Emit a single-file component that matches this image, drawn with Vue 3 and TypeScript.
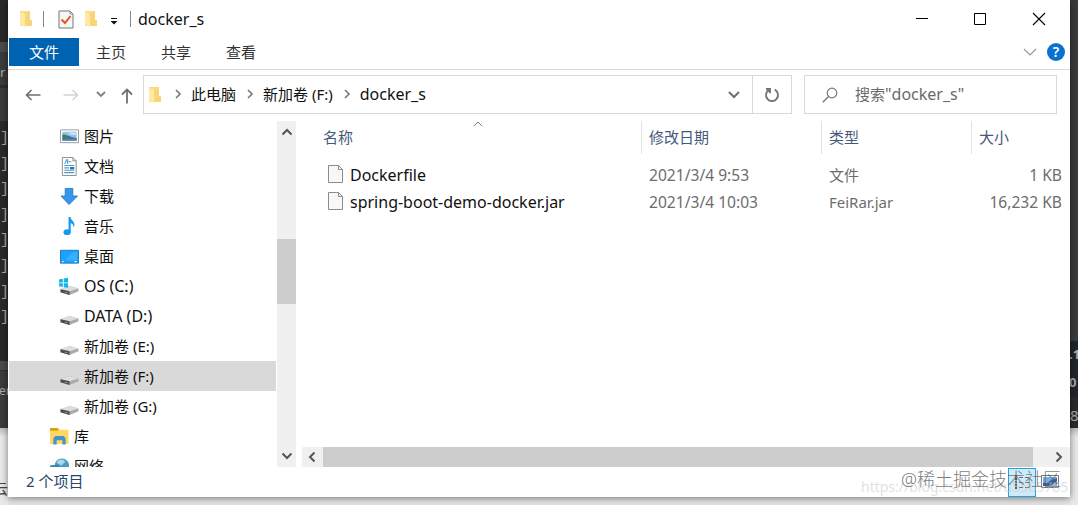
<template>
  <div class="desktop">
    <div class="strip left">
      <div class="band dark top"></div>
      <div class="band bar"></div>
      <div class="band panel tab">r</div>
      <div class="band panel gutter"></div>
      <div class="band dark console">
        <span v-for="n in 8" :key="n">]</span>
      </div>
      <div class="band bar thin"></div>
      <div class="band panel footer">er</div>
      <div class="band page">云</div>
    </div>

    <div class="window">
      <header class="titlebar">
        <svg class="folder" viewBox="0 0 14 18"><path d="M1 1h7v15H1z" fill="#f3d68b" /><path d="M2 1h9v10H2z" fill="#fbdc84" /><path d="M1 2l5 2v13l-5-2z" fill="#ffe9a6" /><path d="M6 4l5-3v9h2v6H6z" fill="#f8d578" /></svg>
        <i class="sep first"></i>
        <svg class="check" viewBox="0 0 16 19"><path d="M1 1h11l3 3v14H1z" fill="#f7f7f7" stroke="#777" /><path d="M12 1v3h3" fill="none" stroke="#999" /><path d="M3.500 9.500l3.500 3.500 5.500-7" fill="none" stroke="#e0561c" stroke-width="2" /></svg>
        <svg class="folder second" viewBox="0 0 14 18"><path d="M1 1h7v15H1z" fill="#f3d68b" /><path d="M2 1h9v10H2z" fill="#fbdc84" /><path d="M1 2l5 2v13l-5-2z" fill="#ffe9a6" /><path d="M6 4l5-3v9h2v6H6z" fill="#f8d578" /></svg>
        <svg class="customize" viewBox="0 0 8 8"><path d="M1 1.500h6" stroke="#111" /><path d="M0.500 4h7L4 7.500z" fill="#111" /></svg>
        <i class="sep"></i>
        <span class="latin">docker_s</span>
        <div class="controls">
          <svg viewBox="0 0 14 14"><path d="M2 6.500h12" stroke="#000" /></svg>
          <svg viewBox="0 0 14 14"><path d="M1.500 1.500h11v11h-11z" fill="none" stroke="#000" /></svg>
          <svg viewBox="0 0 14 14"><path d="M1 1l12 12M13 1L1 13" stroke="#000" stroke-width="1.1" /></svg>
        </div>
      </header>

      <nav class="ribbon">
        <span v-for="(tab, i) in tabs" :key="tab" class="ribbon-tab" :class="{ active: i === 0 }">{{ tab }}</span>
        <svg class="expand" viewBox="0 0 14 8"><path d="M1 1l6 6 6-6" fill="none" stroke="#999" stroke-width="1.2" /></svg>
        <span class="help">?</span>
      </nav>

      <div class="toolbar">
        <svg class="back" viewBox="0 0 16 12"><path d="M15.500 6H1.500M6.500 1l-5 5 5 5" fill="none" stroke="#707070" stroke-width="1.6" /></svg>
        <svg class="forward" viewBox="0 0 16 12"><path d="M0.500 6h14M9.500 1l5 5-5 5" fill="none" stroke="#d4d4d4" stroke-width="1.4" /></svg>
        <svg class="recent" viewBox="0 0 10 7"><path d="M1 1l4 4 4-4" fill="none" stroke="#808080" stroke-width="1.8" /></svg>
        <svg class="up" viewBox="0 0 12 16"><path d="M6 15.500V1.500M1 6.500l5-5 5 5" fill="none" stroke="#707070" stroke-width="1.8" /></svg>
        <div class="address">
          <svg class="folder" viewBox="0 0 14 18"><path d="M1 1h7v15H1z" fill="#f3d68b" /><path d="M2 1h9v10H2z" fill="#fbdc84" /><path d="M1 2l5 2v13l-5-2z" fill="#ffe9a6" /><path d="M6 4l5-3v9h2v6H6z" fill="#f8d578" /></svg>
          <template v-for="part in path" :key="part">
            <svg class="crumb-arrow" viewBox="0 0 6 10"><path d="M1 1l4 4-4 4" fill="none" stroke="#777" stroke-width="1.6" /></svg>
            <span :class="{ latin: isLatin(part) }">{{ part }}</span>
          </template>
          <svg class="drop" viewBox="0 0 12 8"><path d="M1 1l5 5 5-5" fill="none" stroke="#707070" stroke-width="2" /></svg>
          <div class="refresh">
            <svg viewBox="0 0 16 16"><path d="M10.800 2.700a6 6 0 1 1-5.600 0M2 2h4v4.300" fill="none" stroke="#757575" stroke-width="1.900" /></svg>
          </div>
        </div>
        <div class="search">
          <svg viewBox="0 0 16 16"><circle cx="10" cy="6" r="4.800" fill="none" stroke="#777" stroke-width="1.200" /><path d="M6.500 9.500L0.800 15.200" stroke="#777" stroke-width="1.300" /></svg>
          <span>搜索<span class="latin">"docker_s"</span></span>
        </div>
      </div>

      <main class="content">
        <aside class="tree">
          <div
            v-for="item in tree"
            :key="item.label"
            class="node"
            :class="{ selected: item.selected, root: item.root }"
          >
            <svg class="node-icon" viewBox="0 0 20 20">
              <template v-if="item.icon === 'picture'">
                <path d="M.5 3h19v13.500H.5z" fill="#fff" stroke="#9a9a9a" />
                <path d="M2.500 5h15v9.500h-15z" fill="#91c5ef" />
                <path d="M2.500 8c3-1 6 2 15 3.500v2h-15z" fill="#47776d" />
                <path d="M2.500 12.500l15-.5v2.500h-15z" fill="#4b83b5" />
                <path d="M9 6h8v2h-6z" fill="#d5ecfa" />
              </template>
              <template v-else-if="item.icon === 'document'">
                <path d="M2.500.5h11l3.500 3.500v15.500h-14.500z" fill="#fff" stroke="#8c8c8c" />
                <path d="M13.500.5v3.500h3.500" fill="none" stroke="#8c8c8c" />
                <path d="M5 7l2-4h1v4M9 5h3M4.500 9h10.500M4.500 11.500h5M4.500 14h10.500M4.500 16.500h10.500" fill="none" stroke="#4b9bc9" stroke-width="1.200" />
                <path d="M10.500 10.500h4.500v2.500h-4.500z" fill="#2675ab" />
              </template>
              <path v-else-if="item.icon === 'download'" d="M5.500 1.500h8v8h5L9.500 18.500 1 9.500h4.500z" fill="#3596eb" stroke="#2b7fc8" />
              <template v-else-if="item.icon === 'music'">
                <ellipse cx="7.500" cy="16" rx="3.800" ry="3" fill="#169bf0" />
                <path d="M9 0h2.200c0 4 6 5 3.300 11-.4-3-1.800-4.500-3.200-4.500V16H9z" fill="#169bf0" />
              </template>
              <template v-else-if="item.icon === 'desktop'">
                <path d="M.5 3.500h19v13.500H.5z" fill="#1ca4fa" stroke="#1879bd" />
                <path d="M6 14c2-5 7-8 12-9v9z" fill="#35b2ff" />
                <path d="M2 15.500h2M15 15.500h3" stroke="#fff" />
              </template>
              <template v-else-if="item.icon === 'drive' || item.icon === 'system'">
                <path d="M.5 13l9.500-3.500 9.500 2.500v3L10 19 .5 16z" fill="#aaa" />
                <path d="M.5 13L10 9.500l9.500 2.500-9.500 3z" fill="#dedede" />
                <path d="M.5 13l9.500 2v4L.5 16z" fill="#4d4d4d" />
                <path d="M5 16l3 .7" stroke="#999" />
                <path v-if="item.icon === 'system'" d="M-1 2.500l4-.7v3.900h-4zM4 1.600l4.500-.8v4.900H4zM-1 6.700h4v3.800l-4-.7zM4 6.700h4.500v4.700l-4.500-.7z" fill="#12b5ea" />
              </template>
              <template v-else-if="item.icon === 'library'">
                <path d="M0 1h8l2 2h9.500v15H0z" fill="#ffd765" />
                <path d="M0 1h8l1.500 2L8 4H0z" fill="#dda10b" />
                <path d="M3.500 18.500V12l2-2.500h9l2 2.500v6.500H13V14H7v4.500z" fill="#4595c9" />
              </template>
              <template v-else>
                <circle cx="12.500" cy="9" r="7.500" fill="#4c9ac5" />
                <path d="M7 6c2-5 8-4 9-1l-4 4z" fill="#add8ec" />
                <path d="M0 9l8-1 5 6-6 4-7-4z" fill="#3886b6" />
              </template>
            </svg>
            <span :class="{ latin: isLatin(item.label) }">{{ item.label }}</span>
          </div>
        </aside>
        <div class="vscroll">
          <svg viewBox="0 0 12 8"><path d="M1.500 6.500L6 2l4.500 4.500" fill="none" stroke="#555" stroke-width="2" /></svg>
          <div class="vthumb"></div>
          <svg viewBox="0 0 12 8"><path d="M1.500 1.500L6 6l4.500-4.500" fill="none" stroke="#555" stroke-width="2" /></svg>
        </div>
        <section class="files">
          <div class="row head">
            <span class="cell">名称
              <svg class="sort" viewBox="0 0 10 6"><path d="M1 5l4-4 4 4" fill="none" stroke="#777" /></svg>
            </span>
            <span class="cell">修改日期</span>
            <span class="cell">类型</span>
            <span class="cell">大小</span>
          </div>
          <div v-for="file in files" :key="file.name" class="row file">
            <span class="name">
              <svg viewBox="0 0 15 18"><path d="M.5.5h10l4 4v13H.5z" fill="#f8f8f8" stroke="#8c8c8c" /><path d="M10.500.5v4h4" fill="none" stroke="#8c8c8c" /></svg>
              <span class="latin">{{ file.name }}</span>
            </span>
            <span class="date">{{ file.date }}</span>
            <span>{{ file.type }}</span>
            <span class="size">{{ file.size }}</span>
          </div>
          <div class="hscroll">
            <svg viewBox="0 0 8 12"><path d="M6.500 1.500L2 6l4.500 4.500" fill="none" stroke="#555" stroke-width="2" /></svg>
            <div class="hthumb"></div>
            <svg viewBox="0 0 8 12"><path d="M1.500 1.500L6 6l-4.500 4.500" fill="none" stroke="#555" stroke-width="2" /></svg>
          </div>
        </section>
      </main>

      <footer class="status">
        <span>2 个项目</span>
        <div class="view details">
          <svg viewBox="0 0 18 16"><path d="M3 1v14" stroke="#665544" stroke-width="2" stroke-dasharray="2 1" /><path d="M6 3.500h4M12 3.500h4M6 8.500h4M12 8.500h4M6 13.500h4M12 13.500h4" stroke="#667078" /></svg>
        </div>
        <div class="view">
          <svg viewBox="0 0 18 14"><path d="M.5.5h17v12H.5z" fill="#fff" stroke="#777" /><path d="M2 2h14v9H2z" fill="#75afe8" /><path d="M2 8l5-1 9-4v3l-7 5H2z" fill="#375e9c" /></svg>
        </div>
      </footer>
    </div>

    <div class="strip right">
      <div class="band panel side"></div>
      <div class="band navy">.1</div>
      <div class="band navy">0</div>
      <div class="band dark last">8</div>
      <div class="band page"></div>
    </div>
    <div class="watermark url">https://blog.csdn.net/u5565785</div>
    <div class="watermark handle">@稀土掘金技术社区</div>
  </div>
</template>

<script lang="ts" setup>
interface TreeItem {
  label: string
  icon: string
  selected?: boolean
  root?: boolean
}

interface FileItem {
  name: string
  date: string
  type: string
  size: string
}

const tabs = ['文件', '主页', '共享', '查看']
const path = ['此电脑', '新加卷 (F:)', 'docker_s']

const tree: TreeItem[] = [
  { label: '图片', icon: 'picture' },
  { label: '文档', icon: 'document' },
  { label: '下载', icon: 'download' },
  { label: '音乐', icon: 'music' },
  { label: '桌面', icon: 'desktop' },
  { label: 'OS (C:)', icon: 'system' },
  { label: 'DATA (D:)', icon: 'drive' },
  { label: '新加卷 (E:)', icon: 'drive' },
  { label: '新加卷 (F:)', icon: 'drive', selected: true },
  { label: '新加卷 (G:)', icon: 'drive' },
  { label: '库', icon: 'library', root: true },
  { label: '网络', icon: 'network', root: true },
]

const files: FileItem[] = [
  { name: 'Dockerfile', date: '2021/3/4 9:53', type: '文件', size: '1 KB' },
  { name: 'spring-boot-demo-docker.jar', date: '2021/3/4 10:03', type: 'FeiRar.jar', size: '16,232 KB' },
]

// latin-only labels are set slightly larger than the Chinese ones
const isLatin = (text: string) => /^[\x20-\x7e]+$/.test(text)
</script>

<style>
body {
  margin: 0;
  overflow: hidden;
}
</style>

<style scoped>
.desktop {
  position: relative;
  display: grid;
  grid-template-columns: 8px 1062px 8px;
  width: 1078px;
  height: 505px;
  overflow: hidden;
  background: #e4e4e4;
  color: #111;
  font: 15px/20px 'Noto Sans', 'Noto Sans CJK SC', sans-serif;
}

.desktop *,
.desktop {
  box-sizing: border-box;
}

svg {
  display: block;
  flex: none;
  overflow: visible;
}

.latin {
  font-size: 16px;
}

.strip {
  display: flex;
  flex-direction: column;
  height: 505px;
  overflow: hidden;
  color: #aaa;
  font-size: 13px;
}

.band {
  flex: none;
  overflow: hidden;
}

.dark {
  background: #2a2a2b;
}

.panel {
  background: #3a3b3d;
}

.bar {
  height: 10px;
  background: #4b4b4c;
}

.top {
  height: 42px;
}

.tab {
  height: 33px;
  padding-top: 10px;
}

.gutter {
  height: 36px;
  border-top: 3px solid #2d2e30;
}

.console {
  display: flex;
  flex-direction: column;
  height: 240px;
  padding-top: 5px;
  font: 15px/25.6px 'Liberation Mono', monospace;
}

.console span {
  height: 25.6px;
}

.thin {
  border-bottom: 1px solid #303030;
}

.footer {
  height: 57px;
  padding-top: 10px;
  font-size: 12px;
  text-indent: -1px;
}

.left .page {
  height: 77px;
  padding-top: 50px;
  color: #444;
  font-size: 15px;
  text-indent: -7px;
  white-space: nowrap;
}

.page {
  background: linear-gradient(#bdbdbd, #e9e9e9 9px, #e9e9e9);
}

.side {
  height: 341px;
}

.navy {
  height: 28px;
  padding-top: 3px;
  background: #20252c;
  font-weight: 700;
  text-indent: -1px;
}

.last {
  height: 31px;
  padding-top: 8px;
  font-size: 15px;
}

.right .page {
  height: 77px;
}

.window {
  display: flex;
  flex-direction: column;
  height: 497px;
  background: #fff;
  box-shadow: 0 1px 7px rgba(0, 0, 0, 0.5);
  z-index: 1;
}

.titlebar {
  display: flex;
  align-items: center;
  height: 38px;
  padding-left: 11px;
}

.folder {
  width: 14px;
  height: 18px;
}

.sep {
  width: 1px;
  height: 16px;
  margin: 0 7px 0 16px;
  background: #888;
}

.sep.first {
  margin: 0 14px 0 10px;
}

.check {
  width: 16px;
  height: 19px;
}

.second {
  margin-left: 10px;
}

.customize {
  width: 8px;
  height: 8px;
  margin: 3px -4px 0 12px;
}

.controls {
  display: flex;
  gap: 45px;
  margin: 0 24px 0 auto;
}

.controls svg {
  width: 14px;
  height: 14px;
}

.ribbon {
  display: flex;
  align-items: center;
  height: 32px;
  padding: 0 5px 4px 1px;
  border-bottom: 1px solid #d9d9d9;
  color: #333;
}

.ribbon-tab {
  width: 65px;
  height: 28px;
  padding-right: 1px;
  line-height: 28px;
  text-align: center;
}

.ribbon-tab.active {
  width: 70px;
  padding-right: 0;
  background: #0063b1;
  color: #fff;
}

.expand {
  width: 14px;
  height: 8px;
  margin: 0 10px 0 auto;
}

.help {
  width: 18px;
  height: 18px;
  border-radius: 50%;
  background: #0873cf;
  color: #fff;
  font-size: 14px;
  font-weight: 600;
  line-height: 18px;
  text-align: center;
}

.toolbar {
  display: flex;
  align-items: center;
  height: 49px;
  padding-left: 17px;
}

.back,
.forward {
  width: 16px;
  height: 12px;
}

.forward {
  margin-left: 22px;
}

.recent {
  width: 10px;
  height: 7px;
  margin-left: 17px;
}

.up {
  width: 12px;
  height: 16px;
  margin: 2px 0 0 15px;
}

.address {
  display: flex;
  align-items: center;
  width: 649px;
  height: 39px;
  margin-left: 10px;
  padding-left: 4px;
  border: 1px solid #d9d9d9;
}

.address > span,
.search > span {
  padding-bottom: 2px;
}

.crumb-arrow {
  width: 6px;
  height: 10px;
  margin: 0 10px 2px 13px;
}

.address > span + .crumb-arrow {
  margin-left: 11px;
}

.drop {
  width: 12px;
  height: 8px;
  margin: 0 12px 0 auto;
}

.refresh {
  display: flex;
  align-items: center;
  justify-content: center;
  width: 39px;
  height: 37px;
  border-left: 1px solid #d9d9d9;
}

.refresh svg {
  width: 16px;
  height: 16px;
}

.search {
  display: flex;
  align-items: center;
  gap: 17px;
  width: 253px;
  height: 39px;
  margin-left: 12px;
  padding-left: 17px;
  border: 1px solid #d9d9d9;
  color: #6a6a6a;
}

.search svg {
  width: 16px;
  height: 16px;
}

.content {
  display: flex;
  height: 348px;
  padding-top: 2px;
}

.tree {
  width: 269px;
  height: 346px;
  overflow: hidden;
}

.node {
  display: flex;
  align-items: center;
  gap: 5px;
  width: 267px;
  height: 30px;
  margin-left: 1px;
  padding-left: 51px;
}

.node.root {
  padding-left: 41px;
}

.node.selected {
  background: #d9d9d9;
}

.node-icon {
  width: 19px;
  height: 19px;
}

.vscroll {
  display: flex;
  flex-direction: column;
  align-items: center;
  width: 19px;
  height: 346px;
  padding: 7px 0;
  background: #f0f0f0;
}

.vscroll svg {
  width: 12px;
  height: 8px;
}

.vthumb {
  width: 19px;
  height: 65px;
  margin: 103px 0 auto;
  background: #cdcdcd;
}

.files {
  display: flex;
  flex-direction: column;
  width: 768px;
  height: 346px;
  margin-left: 6px;
}

.row {
  display: grid;
  grid-template-columns: 340px 180px 150px 98px;
  flex: none;
}

.head {
  height: 40px;
  color: #44597a;
}

.cell {
  position: relative;
  height: 33px;
  padding: 6px 0 0 7px;
  border-right: 1px solid #e3e3e3;
}

.cell:first-child {
  padding-left: 21px;
}

.cell:last-child {
  border: 0;
}

.sort {
  position: absolute;
  top: 0;
  left: 171px;
  width: 10px;
  height: 6px;
}

.file {
  align-items: center;
  height: 27px;
  color: #6d6d6d;
}

.file > span + span {
  padding-left: 7px;
}

.name {
  display: flex;
  gap: 7px;
  padding-left: 26px;
  color: #111;
}

.name svg {
  width: 15px;
  height: 18px;
}

.date,
.size {
  font-size: 15.6px;
}

.file > .size {
  padding-right: 8px;
  text-align: right;
}

.hscroll {
  display: flex;
  align-items: center;
  height: 20px;
  margin-top: auto;
  padding: 0 7px 0 6px;
  background: #f0f0f0;
}

.hscroll svg {
  width: 8px;
  height: 12px;
}

.hthumb {
  width: 710px;
  height: 20px;
  margin: 0 auto 0 7px;
  background: #cdcdcd;
}

.status {
  display: flex;
  align-items: center;
  height: 30px;
  padding: 0 6px 0 18px;
  color: #26446e;
}

.status > span {
  padding-bottom: 2px;
}

.view {
  display: flex;
  align-items: center;
  justify-content: center;
  width: 28px;
  height: 29px;
}

.view svg {
  width: 18px;
}

.details {
  margin-left: auto;
  border: 1px solid #2aa0d8;
  background: #cdebfa;
}

.watermark {
  position: absolute;
  z-index: 2;
  white-space: nowrap;
}

.handle {
  top: 467px;
  left: 901px;
  color: rgba(90, 90, 90, 0.8);
  font-size: 18px;
  font-weight: 300;
  line-height: 24px;
}

.url {
  top: 477px;
  left: 861px;
  color: rgba(200, 200, 200, 0.55);
  font-size: 14px;
}
</style>
